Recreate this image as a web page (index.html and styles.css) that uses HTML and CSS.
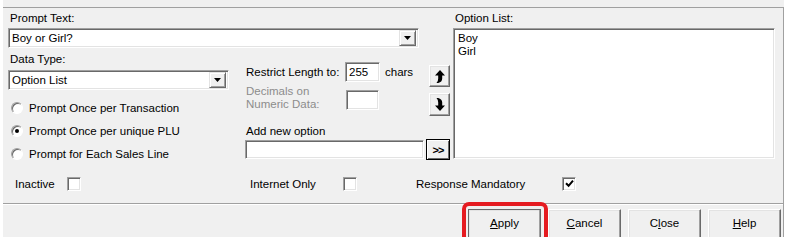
FILE: index.html
```html
<!DOCTYPE html>
<html lang="en">
<head>
  <meta charset="UTF-8">
  <title>Prompt Options</title>
  <link rel="stylesheet" href="styles.css">
</head>
<body>
  <div class="window">
    <div class="panel">
      <div class="top">
        <div class="main">
          <div class="label">Prompt Text:</div>
          <div class="field combo prompt-combo">
            <span class="value">Boy or Girl?</span>
            <span class="drop"><svg width="7" height="4" viewBox="0 0 7 4"><path d="M0 0h7L3.5 4z"/></svg></span>
          </div>
          <div class="cols">
            <div class="left">
              <div class="label type-label">Data Type:</div>
              <div class="field combo type-combo">
                <span class="value">Option List</span>
                <span class="drop"><svg width="7" height="4" viewBox="0 0 7 4"><path d="M0 0h7L3.5 4z"/></svg></span>
              </div>
              <div class="radios">
                <div class="radio"><span class="circle"></span>Prompt Once per Transaction</div>
                <div class="radio"><span class="circle checked"></span>Prompt Once per unique PLU</div>
                <div class="radio"><span class="circle"></span>Prompt for Each Sales Line</div>
              </div>
            </div>
            <div class="mid">
              <div class="upper">
                <div class="settings">
                  <div class="restrict">
                    <span class="restrict-label">Restrict Length to:</span>
                    <span class="field num">255</span>
                    <span class="unit">chars</span>
                  </div>
                  <div class="decimals">
                    <span class="dec-label">Decimals on<br>Numeric Data:</span>
                    <span class="field num dec-input"></span>
                  </div>
                </div>
                <div class="arrows">
                  <div class="btn arrow-btn up">
                    <svg width="10" height="13" viewBox="0 0 10 13"><path d="M5 0L10 5.5H7.2V8.5Q7.2 12 3.2 13H1.5Q3.2 11.5 3.2 8.5V5.5H0Z"/></svg>
                  </div>
                  <div class="btn arrow-btn down">
                    <svg width="10" height="13" viewBox="0 0 10 13"><path d="M5 13L10 7.5H7.2V4.5Q7.2 1 3.2 0H1.5Q3.2 1.5 3.2 4.5V7.5H0Z"/></svg>
                  </div>
                </div>
              </div>
              <div class="add">
                <div class="label">Add new option</div>
                <div class="add-row">
                  <span class="field add-input"></span>
                  <div class="btn go-btn">&gt;&gt;</div>
                </div>
              </div>
            </div>
          </div>
        </div>
        <div class="options">
          <div class="label">Option List:</div>
          <div class="field listbox">
            <div>Boy</div>
            <div>Girl</div>
          </div>
        </div>
      </div>

      <div class="checks">
        <div class="check inactive"><span class="check-text">Inactive</span><span class="box"></span></div>
        <div class="check internet"><span class="check-text">Internet Only</span><span class="box"></span></div>
        <div class="check mandatory"><span class="check-text">Response Mandatory</span><span class="box"><svg width="9" height="9" viewBox="0 0 9 9"><path d="M1 4.2l2.6 2.6L8 1.6" stroke="#000" stroke-width="2" fill="none"/></svg></span></div>
      </div>

      <div class="footer">
        <div class="btn-row">
          <div class="btn action default"><span><u>A</u>pply</span></div>
          <div class="btn action"><span><u>C</u>ancel</span></div>
          <div class="btn action"><span>C<u>l</u>ose</span></div>
          <div class="btn action"><span><u>H</u>elp</span></div>
        </div>
      </div>
    </div>
    <div class="highlight"></div>
  </div>
</body>
</html>
```

FILE: styles.css
```css
* {
  box-sizing: border-box;
}

body {
  margin: 0;
  background: #fff;
  font-family: 'Liberation Sans', Arial, sans-serif;
  font-size: 11.5px;
  color: #000;
}

.window {
  position: relative;
  margin-left: 3px;
  width: 781px;
  height: 237px;
  padding-top: 7px;
  background: #f0f0f0;
}

.panel {
  height: 230px;
  border-top: 1px solid #a0a0a0;
  border-right: 1px solid #a0a0a0;
}

.label {
  line-height: 14px;
  padding-left: 2px;
  white-space: nowrap;
}

.top {
  display: flex;
  padding: 3px 0 0 5px;
}

.main {
  width: 442px;
}

/* sunken white fields */
.field {
  display: block;
  background: #fff;
  border: 1px solid;
  border-color: #a0a0a0 #fff #fff #a0a0a0;
  box-shadow: inset 1px 1px 0 #696969, inset -1px -1px 0 #e3e3e3;
}

.combo {
  display: flex;
  align-items: center;
  height: 20px;
  padding: 0 2px 0 3px;
  margin-top: 3px;
}

.combo .value {
  flex: 1;
  line-height: 14px;
}

.drop {
  display: flex;
  align-items: center;
  justify-content: center;
  width: 17px;
  height: 16px;
  background: #f0f0f0;
  border: 1px solid;
  border-color: #e3e3e3 #696969 #696969 #e3e3e3;
  box-shadow: inset 1px 1px 0 #fff, inset -1px -1px 0 #a0a0a0;
}

.prompt-combo {
  width: 411px;
}

.cols {
  display: flex;
}

.left {
  width: 221px;
}

.type-label {
  margin-top: 4px;
}

.type-combo {
  width: 221px;
  margin-top: 4px;
}

.radios {
  margin-top: 6px;
}

.radio {
  display: flex;
  align-items: center;
  height: 23px;
  white-space: nowrap;
}

.circle {
  position: relative;
  width: 12px;
  height: 12px;
  margin: 0 6px 0 3px;
  border-radius: 50%;
  background: #fff;
  border: 1px solid;
  border-color: #a0a0a0 #fff #fff #a0a0a0;
  box-shadow: inset 1px 1px 0 #696969;
}

.circle.checked::after {
  content: '';
  position: absolute;
  left: 3px;
  top: 3px;
  width: 4px;
  height: 4px;
  border-radius: 50%;
  background: #000;
}

.mid {
  width: 206px;
  margin-left: 15px;
}

.upper {
  display: flex;
}

.settings {
  width: 185px;
}

.restrict {
  display: flex;
  align-items: center;
  height: 20px;
  margin-top: 14px;
  white-space: nowrap;
}

.restrict-label {
  width: 101px;
  padding-left: 2px;
}

.num {
  width: 35px;
  height: 20px;
  line-height: 18px;
  padding-left: 3px;
}

.unit {
  margin-left: 5px;
}

.decimals {
  display: flex;
  height: 28px;
  margin-top: 2px;
}

.dec-label {
  width: 102px;
  padding: 1px 0 0 2px;
  line-height: 13px;
  color: #8c8c8c;
}

.dec-input {
  width: 33px;
  margin-top: 6px;
}

/* raised buttons */
.btn {
  display: flex;
  align-items: center;
  justify-content: center;
  background: #f0f0f0;
  border: 1px solid;
  border-color: #fff #696969 #696969 #fff;
  box-shadow: inset -1px -1px 0 #a0a0a0, inset 1px 1px 0 #e3e3e3;
}

.arrows {
  display: flex;
  flex-direction: column;
  gap: 6px;
  width: 21px;
  margin-top: 17px;
}

.arrow-btn {
  height: 22px;
}

.arrow-btn.down {
  height: 23px;
}

.add {
  margin-top: 8px;
}

.add-row {
  display: flex;
  align-items: center;
  margin-top: 1px;
}

.add-input {
  width: 179px;
  height: 19px;
  margin-left: 1px;
}

.go-btn {
  width: 24px;
  height: 21px;
  margin-left: 2px;
  border-color: #000;
  box-shadow: inset 1px 1px 0 #fff, inset -1px -1px 0 #696969;
  font-weight: bold;
  font-size: 11px;
  letter-spacing: -1px;
}

.options {
  width: 323px;
  margin-left: 3px;
}

.listbox {
  width: 322px;
  height: 131px;
  margin-top: 3px;
  padding: 3px 4px;
  line-height: 13px;
}

.checks {
  display: flex;
  align-items: center;
  height: 15px;
  margin-top: 11px;
  padding-left: 12px;
}

.check {
  display: flex;
  align-items: center;
  white-space: nowrap;
}

.inactive {
  width: 235px;
}

.inactive .check-text {
  width: 52px;
}

.internet {
  width: 166px;
}

.internet .check-text {
  width: 93px;
}

.mandatory .check-text {
  width: 146px;
}

.box {
  display: flex;
  align-items: center;
  justify-content: center;
  width: 14px;
  height: 14px;
  background: #fff;
  border: 1px solid;
  border-color: #a0a0a0 #fff #fff #a0a0a0;
  box-shadow: inset 1px 1px 0 #696969, inset -1px -1px 0 #e3e3e3;
}

.footer {
  margin-top: 12px;
  border-top: 1px solid #a0a0a0;
  box-shadow: inset 0 1px 0 #fff;
  padding-top: 5px;
}

.btn-row {
  display: flex;
  justify-content: flex-end;
  gap: 7px;
  height: 28px;
  padding-right: 2px;
  overflow: hidden;
}

.action {
  flex: none;
  width: 73px;
  height: 31px;
  padding-bottom: 3px;
}

.action.default {
  border-color: #696969;
}

.highlight {
  position: absolute;
  left: 459px;
  top: 202px;
  width: 86px;
  height: 41px;
  border: 4px solid #e51b20;
  border-radius: 7px;
}
```
